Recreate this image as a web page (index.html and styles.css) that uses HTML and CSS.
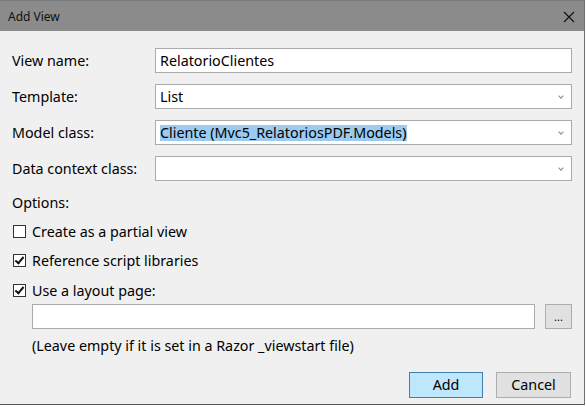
FILE: index.html
```html
<html>
    <head>
        <meta charset="utf-8" />
        <title>Add View</title>
        <link rel="stylesheet" href="styles.css">
    </head>
    <body>
        <div class="dialog">
            <div class="titlebar">
                <span class="title">Add View</span>
                <svg class="close" width="12" height="12" viewBox="0 0 12 12">
                    <path d="M1 1 L11 11 M11 1 L1 11" stroke="#111" stroke-width="1.1" fill="none" />
                </svg>
            </div>
            <div class="content">
                <div class="fields">
                    <label>View name:</label>
                    <div class="field">RelatorioClientes</div>
                    <label>Template:</label>
                    <div class="field combo">List<span class="arrow"></span></div>
                    <label>Model class:</label>
                    <div class="field combo"><span class="selected">Cliente (Mvc5_RelatoriosPDF.Models)</span><span class="arrow"></span></div>
                    <label>Data context class:</label>
                    <div class="field combo"><span class="arrow"></span></div>
                </div>
                <div class="options-label">Options:</div>
                <div class="check first">
                    <span class="box"></span>
                    <span>Create as a partial view</span>
                </div>
                <div class="check">
                    <span class="box checked"></span>
                    <span>Reference script libraries</span>
                </div>
                <div class="check last">
                    <span class="box checked"></span>
                    <span>Use a layout page:</span>
                </div>
                <div class="layout-row">
                    <div class="field layout-field"></div>
                    <div class="browse">...</div>
                </div>
                <div class="hint">(Leave empty if it is set in a Razor _viewstart file)</div>
                <div class="buttons">
                    <div class="btn primary">Add</div>
                    <div class="btn">Cancel</div>
                </div>
            </div>
        </div>
    </body>
</html>
```
FILE: styles.css
```css
body{
    margin: 0;
    background-color: #fff;
    font-family: "Noto Sans", "Open Sans", sans-serif;
    font-size: 14.3px;
    color: #000;
}

.dialog{
    width: 584px;
    height: 404px;
    background-color: #f0f0f0;
    border-right: 1px solid #6e6e6e;
    border-bottom: 1px solid #555;
    overflow: hidden;
}

.titlebar{
    height: 31px;
    background-color: #8b8b8b;
    border-top: 1px solid #7a7a7a;
    box-sizing: border-box;
    display: flex;
    align-items: center;
    justify-content: space-between;
    padding: 0 9px 0 8px;
}

.title{
    font-size: 12px;
    color: #111;
}

.close{
    margin-top: 1px;
}

.content{
    padding: 17px 12px 0 12px;
}

.fields{
    display: grid;
    grid-template-columns: 143px 417px;
    grid-auto-rows: 25px;
    row-gap: 11px;
    align-items: center;
}

.field{
    height: 25px;
    box-sizing: border-box;
    border: 1px solid #ababab;
    background-color: #fff;
    display: flex;
    align-items: center;
    padding-left: 4px;
    position: relative;
}

.arrow{
    position: absolute;
    right: 8px;
    top: 9px;
    width: 3px;
    height: 3px;
    border-right: 1px solid #888;
    border-bottom: 1px solid #888;
    transform: rotate(45deg);
}

.selected{
    background-color: #9ccbf0;
    line-height: 16px;
}

.options-label{
    margin-top: 12px;
    height: 20px;
    line-height: 20px;
}

.check{
    display: flex;
    align-items: center;
    height: 20px;
    margin-top: 9px;
}

.check.first{
    margin-top: 8px;
}

.check.last{
    margin-top: 10px;
}

.box{
    width: 13px;
    height: 13px;
    box-sizing: border-box;
    border: 1px solid #333;
    background-color: #fff;
    margin: 0 6px 0 1px;
    position: relative;
}

.box.checked::after{
    content: "";
    position: absolute;
    left: 3px;
    top: 0px;
    width: 3px;
    height: 7px;
    border-right: 2px solid #111;
    border-bottom: 2px solid #111;
    transform: rotate(40deg);
}

.layout-row{
    display: flex;
    margin-top: 4px;
    padding-left: 20px;
}

.layout-field{
    width: 503px;
}

.browse{
    width: 27px;
    height: 25px;
    box-sizing: border-box;
    margin-left: 10px;
    border: 1px solid #adadad;
    background-color: #e1e1e1;
    font-size: 11px;
    text-align: center;
    line-height: 24px;
}

.hint{
    margin-top: 7px;
    padding-left: 20px;
    height: 20px;
    line-height: 20px;
}

.buttons{
    display: flex;
    justify-content: flex-end;
    gap: 13px;
    margin-top: 16px;
    padding-right: 1px;
}

.btn{
    width: 75px;
    height: 26px;
    box-sizing: border-box;
    border: 1px solid #adadad;
    background-color: #e1e1e1;
    text-align: center;
    line-height: 24px;
}

.btn.primary{
    width: 74px;
    background-color: #bee6fd;
    border-color: #3c7fb1;
}
```
